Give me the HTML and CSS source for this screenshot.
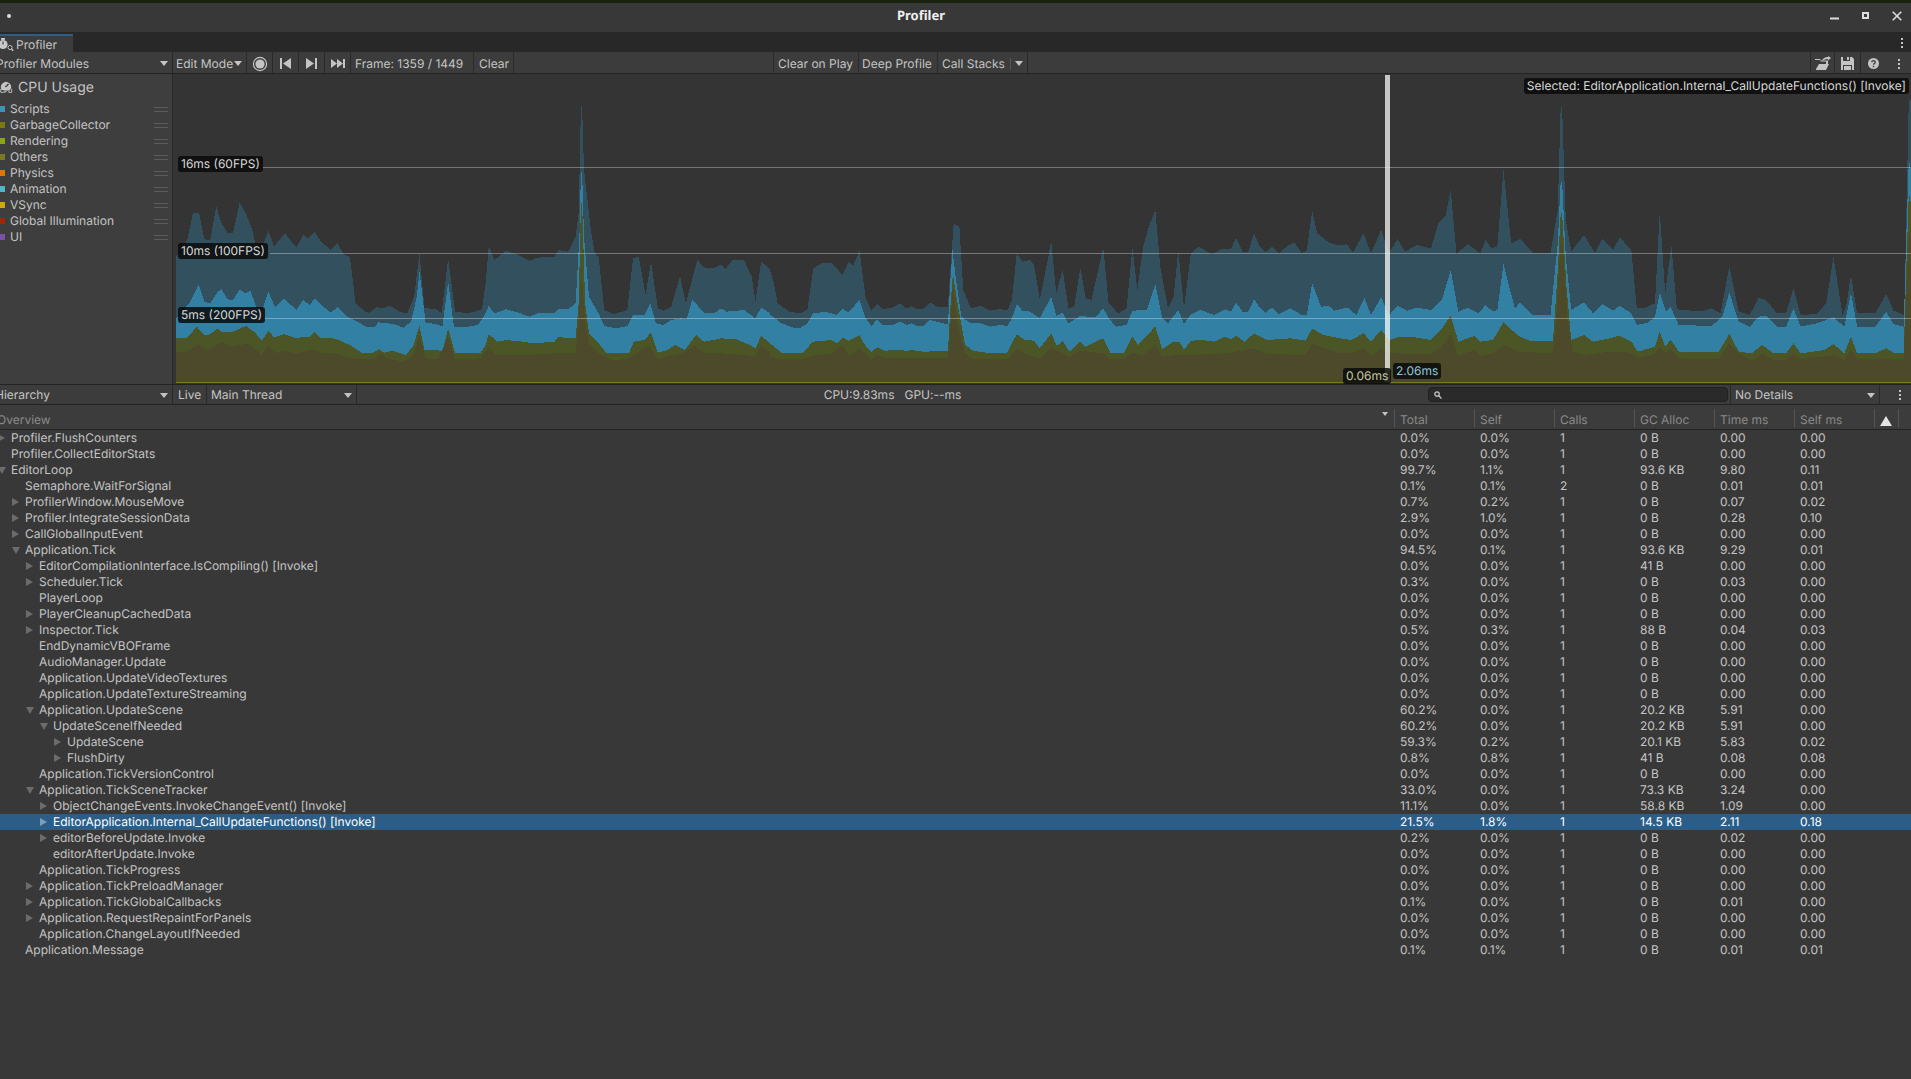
FILE: index.html
```html
<!DOCTYPE html>
<html lang="en">
<head>
    <meta charset="UTF-8">
    <meta name="viewport" content="width=device-width, initial-scale=1.0">
    <title>Profiler</title>
    <link rel="stylesheet" href="styles.css">
</head>
<body>
    <div class="top-line"></div>
    <header class="title-bar">
        <span class="menu-dot"></span>
        <span class="title">Profiler</span>
        <div class="win-btns">
            <svg width="9" height="9" viewBox="0 0 9 9"><path d="M0 7.5h9" stroke="#ddd" stroke-width="2"/></svg>
            <svg width="7" height="7" viewBox="0 0 7 7"><path d="M1 1h5v5H1z" fill="none" stroke="#ddd" stroke-width="2"/></svg>
            <svg width="10" height="10" viewBox="0 0 10 10"><path d="M.7.7l8.6 8.6M9.3.7L.7 9.3" stroke="#ddd" stroke-width="1.6"/></svg>
        </div>
    </header>

    <div class="tab-bar">
        <div class="tab">
            <svg class="tab-icon" width="14" height="14" viewBox="0 0 14 14">
                <circle cx="3" cy="6.5" r="4.6" fill="#c8c8c8"/>
                <path d="M1.5 0h3v1.5h-3zM3 3v3.5" stroke="#c8c8c8" fill="#c8c8c8"/>
                <path d="M3 3.5v3" stroke="#333"/>
                <circle cx="10" cy="9.5" r="2" fill="#282828" stroke="#c8c8c8"/>
                <path d="M11.5 11l1.8 1.8" stroke="#c8c8c8" stroke-width="1.3"/>
            </svg>
            <span>Profiler</span>
        </div>
        <span class="kebab tab-kebab"><i></i><i></i><i></i></span>
    </div>

    <div class="toolbar">
        <div class="tool drop w-modules"><span class="cut">Profiler Modules</span><b class="caret"></b></div>
        <div class="tool drop w-mode"><span>Edit Mode</span><b class="caret"></b></div>
        <div class="tool icon w-btn">
            <svg width="16" height="16" viewBox="0 0 16 16"><circle cx="8" cy="8" r="6.6" fill="none" stroke="#c4c4c4" stroke-width="1.2"/><circle cx="8" cy="8" r="4.6" fill="#c4c4c4"/></svg>
        </div>
        <div class="tool icon w-btn">
            <svg width="11" height="11" viewBox="0 0 11 11"><path d="M0 0h2v11H0zM11 0v11L3 5.5z" fill="#c4c4c4"/></svg>
        </div>
        <div class="tool icon w-btn">
            <svg width="11" height="11" viewBox="0 0 11 11"><path d="M9 0h2v11H9zM0 0v11l8-5.5z" fill="#c4c4c4"/></svg>
        </div>
        <div class="tool icon w-btn">
            <svg width="14" height="9" viewBox="0 0 14 9"><path d="M0 0v9l6-4.5zM6 0v9l6-4.5zM12 0h2v9h-2z" fill="#c4c4c4"/></svg>
        </div>
        <div class="tool w-frame">Frame: 1359 / 1449</div>
        <div class="tool w-clear">Clear</div>
        <div class="tool w-gap"></div>
        <div class="tool w-cop">Clear on Play</div>
        <div class="tool w-deep">Deep Profile</div>
        <div class="tool drop w-stacks"><span>Call Stacks</span><u class="sep"></u><b class="caret"></b></div>
        <div class="grow"></div>
        <div class="tool-end icon w-end">
            <svg width="16" height="15" viewBox="0 0 16 15"><path d="M0 4h5l1 1.5h5V8H4L1 13V14h10l3-6h-1V4.500H6L5 3H0z" fill="#c4c4c4"/><path d="M7 5c1-3 3-4 6-4V0l3 2-3 2.500V3C10 3 8.500 4 7 5z" fill="#c4c4c4"/></svg>
        </div>
        <div class="tool-end icon w-end2">
            <svg width="13" height="13" viewBox="0 0 13 13"><path d="M0 0h2v4h7V0h2l2 2v11h-2V8H2v5H0z" fill="#c4c4c4"/><path d="M6 0h2v3H6zM3 9h7v4H3z" fill="#c4c4c4"/></svg>
        </div>
        <div class="tool-end icon w-end2">
            <svg width="11" height="11" viewBox="0 0 11 11"><circle cx="5.5" cy="5.5" r="5.5" fill="#c4c4c4"/><path d="M3.8 4.200c0-2.200 3.400-2.200 3.400 0 0 1.300-1.700 1.200-1.700 2.500" fill="none" stroke="#3c3c3c" stroke-width="1.3"/><path d="M4.800 7.800h1.400v1.400H4.800z" fill="#3c3c3c"/></svg>
        </div>
        <div class="icon w-end3"><span class="kebab"><i></i><i></i><i></i></span></div>
    </div>

    <div class="chart-row">
        <aside class="modules">
            <div class="module-head">
                <span class="cpu-icon">
                    <svg width="12" height="9" viewBox="0 0 12 9"><path d="M2 9a5 5 0 1 1 8 0z" fill="#c4c4c4"/><path d="M5.5 6l3-3" stroke="#3e3e3e" stroke-width="1.4"/></svg>
                    <em>CPU</em>
                </span>
                <span>CPU Usage</span>
            </div>
            <ul class="legend">
                <li><i class="c-scripts"></i>Scripts<s></s></li>
                <li><i class="c-gc"></i>GarbageCollector<s></s></li>
                <li><i class="c-render"></i>Rendering<s></s></li>
                <li><i class="c-others"></i>Others<s></s></li>
                <li><i class="c-physics"></i>Physics<s></s></li>
                <li><i class="c-anim"></i>Animation<s></s></li>
                <li><i class="c-vsync"></i>VSync<s></s></li>
                <li><i class="c-gi"></i>Global Illumination<s></s></li>
                <li><i class="c-ui"></i>UI<s></s></li>
            </ul>
        </aside>
        <div class="chart">
            <svg class="graph" width="1738" height="310" viewBox="173 74 1738 310">
                <!-- traced in three pieces, left / middle / right -->
                <g transform="translate(170 70) scale(.38265 .33333)">
                    <polygon class="l-a" points="16,937 16,560 30,545 45,510 60,430 76,428 90,508 105,510 121,410 135,460 150,488 165,488 182,398 200,435 215,480 225,530 240,535 257,482 272,530 300,490 330,532 348,495 362,505 378,485 395,515 420,540 438,520 455,555 470,560 485,700 510,725 520,728 540,712 555,715 575,708 600,725 620,730 638,680 652,550 665,715 690,716 710,728 727,565 745,725 780,730 815,718 825,640 833,528 848,570 878,543 910,555 940,572 960,563 1005,560 1015,540 1040,545 1060,500 1068,430 1074,108 1077,108 1082,300 1100,480 1110,550 1120,560 1135,720 1160,733 1195,720 1210,565 1225,560 1243,675 1257,575 1275,715 1290,722 1310,710 1333,618 1348,700 1378,570 1395,592 1420,595 1440,583 1452,597 1470,570 1500,570 1520,620 1530,695 1545,575 1568,597 1568,937"/>
                    <polygon class="l-b" points="16,937 16,745 50,700 75,645 90,695 105,700 125,665 135,658 150,688 165,690 182,658 197,670 210,662 225,710 240,725 257,665 275,713 298,685 330,720 348,690 365,705 378,685 395,705 420,728 438,712 460,738 490,755 515,772 535,770 545,757 585,762 610,773 630,755 645,680 652,605 660,680 668,758 695,762 712,770 727,635 742,770 770,772 805,765 820,740 833,708 848,730 878,718 910,728 940,740 960,730 1005,730 1015,718 1040,718 1060,700 1070,500 1074,305 1077,305 1082,500 1095,680 1120,730 1135,768 1165,775 1195,768 1210,735 1240,735 1255,700 1270,760 1290,765 1310,750 1335,745 1350,748 1365,688 1395,728 1425,728 1440,715 1455,725 1500,720 1530,745 1545,712 1568,730 1568,937"/>
                    <polygon class="l-c" points="16,937 16,805 45,803 70,770 90,795 105,793 125,775 135,785 165,785 198,768 220,785 240,812 257,783 272,802 298,793 330,805 350,800 365,800 378,785 395,805 420,803 440,810 470,825 500,848 530,848 545,838 560,848 580,842 615,855 635,830 652,768 665,840 700,840 712,845 727,775 745,850 810,850 825,825 833,792 855,815 880,810 920,815 950,820 1005,815 1015,800 1040,805 1060,805 1068,700 1074,400 1077,400 1085,700 1095,790 1120,820 1140,848 1200,848 1212,815 1240,810 1257,788 1275,848 1300,840 1320,825 1345,840 1375,795 1395,815 1420,810 1440,805 1480,808 1515,825 1530,835 1545,797 1568,820 1568,937"/>
                    <polygon class="l-d" points="16,937 16,848 45,845 75,822 95,843 135,815 165,830 205,820 225,840 240,855 257,825 275,850 298,842 330,850 350,845 378,838 400,850 430,850 470,865 530,868 552,852 575,868 610,875 635,858 652,795 668,865 700,868 727,800 745,868 810,865 833,830 850,855 930,855 1005,850 1060,850 1068,750 1075,590 1085,760 1095,820 1120,850 1160,872 1200,865 1250,825 1275,868 1320,853 1340,850 1370,825 1395,850 1440,850 1530,858 1545,825 1568,850 1568,937"/>
                </g>
                <g transform="translate(770 70) scale(.38265 .33333)">
                    <polygon class="l-a" points="0,937 0,600 10,640 20,700 50,725 80,730 98,718 113,595 135,580 160,578 190,615 205,577 218,585 234,543 250,685 265,722 280,702 295,718 320,712 340,700 358,716 370,708 385,718 403,715 418,697 440,712 465,712 472,590 480,462 495,470 505,660 525,715 550,708 575,722 600,717 620,722 632,690 645,550 660,575 680,570 690,585 705,690 735,515 748,670 765,600 780,715 795,710 811,593 825,685 840,690 871,533 885,700 910,730 932,715 947,533 960,660 975,530 990,470 1007,420 1020,590 1040,715 1055,680 1067,542 1082,715 1100,550 1120,530 1155,553 1180,538 1205,537 1218,503 1235,545 1250,545 1265,490 1280,530 1295,547 1312,530 1330,550 1355,525 1370,517 1390,550 1403,540 1417,422 1430,490 1460,517 1480,525 1490,525 1490,937"/>
                    <polygon class="l-b" points="0,937 0,733 30,760 60,773 80,773 98,760 113,728 150,727 175,735 190,717 205,727 234,690 250,745 265,768 280,748 295,765 320,765 340,755 358,765 370,760 385,768 403,767 418,750 465,763 472,620 477,540 485,620 500,740 525,760 550,760 575,770 600,765 620,768 632,745 645,703 660,722 680,725 705,745 735,680 748,738 765,728 780,760 810,738 850,742 871,715 885,745 905,770 932,765 947,722 985,720 1007,642 1025,745 1040,760 1067,720 1082,762 1100,733 1125,720 1160,735 1190,718 1205,725 1218,698 1235,725 1250,725 1265,688 1280,712 1295,728 1312,712 1330,732 1360,715 1390,735 1403,735 1417,640 1440,710 1460,708 1475,722 1490,718 1490,937"/>
                    <polygon class="l-c" points="0,937 0,820 30,848 85,848 113,815 160,810 175,820 190,802 205,812 234,795 250,830 265,845 280,832 300,842 340,840 358,843 370,840 400,845 465,843 472,700 478,610 490,700 510,825 530,842 575,850 620,848 645,792 665,810 690,812 705,835 735,790 750,828 765,812 782,845 811,815 825,830 870,805 890,848 925,848 947,800 962,825 1000,778 1007,770 1025,838 1055,815 1070,815 1082,840 1100,812 1130,810 1160,815 1190,800 1205,808 1218,797 1240,815 1265,790 1300,810 1360,805 1400,812 1417,775 1445,795 1490,805 1490,937"/>
                    <polygon class="l-d" points="0,937 0,860 30,868 85,868 113,855 160,852 190,825 205,858 234,835 265,868 280,855 300,865 465,865 472,760 478,640 490,760 510,850 530,868 620,868 645,835 665,852 705,865 735,832 765,850 782,860 811,842 870,850 890,868 925,868 947,848 975,855 1007,825 1025,860 1060,855 1100,855 1190,850 1265,835 1300,852 1400,855 1417,822 1490,850 1490,937"/>
                </g>
                <g transform="translate(1340 70) scale(.36416 .33333)">
                    <polygon class="l-a" points="0,937 0,525 20,523 35,548 65,490 85,550 113,480 135,548 158,507 178,545 210,525 250,535 270,460 290,437 304,360 320,552 350,522 385,550 400,510 415,535 432,530 449,300 470,520 495,507 530,548 578,548 598,420 606,110 610,110 620,450 635,545 670,495 700,548 720,507 750,540 768,502 800,540 815,715 835,715 865,700 878,425 893,670 910,525 925,718 965,722 1000,722 1020,715 1045,730 1069,590 1095,725 1125,735 1150,683 1170,690 1200,730 1225,730 1245,655 1265,735 1310,732 1335,700 1355,560 1380,735 1390,710 1403,615 1420,730 1470,730 1500,672 1520,722 1550,735 1555,450 1562,85 1568,90 1568,937"/>
                    <polygon class="l-b" points="0,937 0,718 20,712 45,735 67,683 85,735 113,682 135,735 158,708 185,722 210,713 250,720 280,690 304,600 325,725 350,713 380,730 400,705 420,725 432,720 449,582 480,715 495,698 530,735 578,735 598,520 606,335 610,335 620,560 635,720 670,697 695,730 720,702 750,722 768,707 800,730 815,765 845,758 865,740 878,668 895,725 908,712 930,765 1020,768 1050,740 1069,668 1095,755 1125,770 1150,740 1170,738 1200,770 1225,770 1245,715 1265,770 1310,760 1355,742 1385,770 1403,668 1420,770 1470,770 1500,725 1520,762 1548,770 1555,500 1562,270 1568,300 1568,937"/>
                    <polygon class="l-c" points="0,937 0,805 30,810 65,790 85,815 113,780 135,810 165,800 205,802 250,810 280,775 304,737 325,815 368,798 385,815 420,810 449,757 490,798 520,812 585,812 598,600 606,430 610,430 622,650 635,810 670,795 695,815 740,805 768,797 800,815 818,845 865,830 878,785 893,830 908,808 930,845 1040,845 1069,792 1095,845 1130,850 1160,825 1190,850 1225,850 1245,820 1265,850 1330,840 1355,822 1385,850 1403,800 1420,850 1470,850 1500,835 1520,848 1548,850 1555,600 1562,370 1568,400 1568,937"/>
                    <polygon class="l-d" points="0,937 0,850 30,850 65,835 85,858 113,835 135,850 250,852 280,830 304,790 325,858 368,840 385,858 420,850 449,825 490,845 585,850 595,720 608,470 625,750 640,845 670,855 740,845 800,848 818,865 865,850 878,830 893,850 908,835 930,865 1040,868 1069,820 1095,850 1130,872 1160,850 1190,870 1225,870 1245,850 1265,868 1355,855 1385,870 1403,840 1420,868 1548,868 1555,650 1562,500 1568,500 1568,937"/>
                </g>
                <path class="base" d="M176 382.5H1911"/>
                <path class="grid" d="M262 167.5H1911M270 253.5H1911M264 318.5H1911"/>
                <path class="sel-bar" d="M1387.5 75V382"/>
            </svg>
            <span class="pill p16">16ms (60FPS)</span>
            <span class="pill p10">10ms (100FPS)</span>
            <span class="pill p5">5ms (200FPS)</span>
            <span class="pill p-self">0.06ms</span>
            <span class="pill p-total">2.06ms</span>
            <span class="pill p-name">Selected: EditorApplication.Internal_CallUpdateFunctions() [Invoke]</span>
        </div>
    </div>

    <div class="toolbar toolbar-2">
        <div class="tool drop w-hier"><span class="cut-h">Hierarchy</span><b class="caret"></b></div>
        <div class="tool w-live">Live</div>
        <div class="tool drop w-thread"><span>Main Thread</span><b class="caret"></b></div>
        <div class="stats"><span>CPU:9.83ms</span><span>GPU:--ms</span></div>
        <div class="search">
            <svg width="8" height="8" viewBox="0 0 8 8"><circle cx="3" cy="3" r="2.2" fill="none" stroke="#c4c4c4" stroke-width="1.3"/><path d="M4.7 4.7L7.5 7.5" stroke="#c4c4c4" stroke-width="1.3"/></svg>
        </div>
        <div class="tool drop w-details"><span>No Details</span><b class="caret"></b></div>
        <div class="icon w-end4"><span class="kebab"><i></i><i></i><i></i></span></div>
    </div>

    <div class="thead">
        <div class="th-name"><span class="cut-o">Overview</span><b class="sort-mini"></b></div>
        <div class="th">Total</div>
        <div class="th">Self</div>
        <div class="th">Calls</div>
        <div class="th">GC Alloc</div>
        <div class="th">Time ms</div>
        <div class="th">Self ms</div>
        <div class="th th-warn"><b class="warn"></b></div>
    </div>

    <main class="tbody">
        <div class="row"><div class="name d0 closed">Profiler.FlushCounters</div><div>0.0%</div><div>0.0%</div><div>1</div><div>0 B</div><div>0.00</div><div>0.00</div></div>
        <div class="row"><div class="name d0">Profiler.CollectEditorStats</div><div>0.0%</div><div>0.0%</div><div>1</div><div>0 B</div><div>0.00</div><div>0.00</div></div>
        <div class="row"><div class="name d0 open">EditorLoop</div><div>99.7%</div><div>1.1%</div><div>1</div><div>93.6 KB</div><div>9.80</div><div>0.11</div></div>
        <div class="row"><div class="name d1">Semaphore.WaitForSignal</div><div>0.1%</div><div>0.1%</div><div>2</div><div>0 B</div><div>0.01</div><div>0.01</div></div>
        <div class="row"><div class="name d1 closed">ProfilerWindow.MouseMove</div><div>0.7%</div><div>0.2%</div><div>1</div><div>0 B</div><div>0.07</div><div>0.02</div></div>
        <div class="row"><div class="name d1 closed">Profiler.IntegrateSessionData</div><div>2.9%</div><div>1.0%</div><div>1</div><div>0 B</div><div>0.28</div><div>0.10</div></div>
        <div class="row"><div class="name d1 closed">CallGlobalInputEvent</div><div>0.0%</div><div>0.0%</div><div>1</div><div>0 B</div><div>0.00</div><div>0.00</div></div>
        <div class="row"><div class="name d1 open">Application.Tick</div><div>94.5%</div><div>0.1%</div><div>1</div><div>93.6 KB</div><div>9.29</div><div>0.01</div></div>
        <div class="row"><div class="name d2 closed">EditorCompilationInterface.IsCompiling() [Invoke]</div><div>0.0%</div><div>0.0%</div><div>1</div><div>41 B</div><div>0.00</div><div>0.00</div></div>
        <div class="row"><div class="name d2 closed">Scheduler.Tick</div><div>0.3%</div><div>0.0%</div><div>1</div><div>0 B</div><div>0.03</div><div>0.00</div></div>
        <div class="row"><div class="name d2">PlayerLoop</div><div>0.0%</div><div>0.0%</div><div>1</div><div>0 B</div><div>0.00</div><div>0.00</div></div>
        <div class="row"><div class="name d2 closed">PlayerCleanupCachedData</div><div>0.0%</div><div>0.0%</div><div>1</div><div>0 B</div><div>0.00</div><div>0.00</div></div>
        <div class="row"><div class="name d2 closed">Inspector.Tick</div><div>0.5%</div><div>0.3%</div><div>1</div><div>88 B</div><div>0.04</div><div>0.03</div></div>
        <div class="row"><div class="name d2">EndDynamicVBOFrame</div><div>0.0%</div><div>0.0%</div><div>1</div><div>0 B</div><div>0.00</div><div>0.00</div></div>
        <div class="row"><div class="name d2">AudioManager.Update</div><div>0.0%</div><div>0.0%</div><div>1</div><div>0 B</div><div>0.00</div><div>0.00</div></div>
        <div class="row"><div class="name d2">Application.UpdateVideoTextures</div><div>0.0%</div><div>0.0%</div><div>1</div><div>0 B</div><div>0.00</div><div>0.00</div></div>
        <div class="row"><div class="name d2">Application.UpdateTextureStreaming</div><div>0.0%</div><div>0.0%</div><div>1</div><div>0 B</div><div>0.00</div><div>0.00</div></div>
        <div class="row"><div class="name d2 open">Application.UpdateScene</div><div>60.2%</div><div>0.0%</div><div>1</div><div>20.2 KB</div><div>5.91</div><div>0.00</div></div>
        <div class="row"><div class="name d3 open">UpdateSceneIfNeeded</div><div>60.2%</div><div>0.0%</div><div>1</div><div>20.2 KB</div><div>5.91</div><div>0.00</div></div>
        <div class="row"><div class="name d4 closed">UpdateScene</div><div>59.3%</div><div>0.2%</div><div>1</div><div>20.1 KB</div><div>5.83</div><div>0.02</div></div>
        <div class="row"><div class="name d4 closed">FlushDirty</div><div>0.8%</div><div>0.8%</div><div>1</div><div>41 B</div><div>0.08</div><div>0.08</div></div>
        <div class="row"><div class="name d2">Application.TickVersionControl</div><div>0.0%</div><div>0.0%</div><div>1</div><div>0 B</div><div>0.00</div><div>0.00</div></div>
        <div class="row"><div class="name d2 open">Application.TickSceneTracker</div><div>33.0%</div><div>0.0%</div><div>1</div><div>73.3 KB</div><div>3.24</div><div>0.00</div></div>
        <div class="row"><div class="name d3 closed">ObjectChangeEvents.InvokeChangeEvent() [Invoke]</div><div>11.1%</div><div>0.0%</div><div>1</div><div>58.8 KB</div><div>1.09</div><div>0.00</div></div>
        <div class="row selected"><div class="name d3 closed">EditorApplication.Internal_CallUpdateFunctions() [Invoke]</div><div>21.5%</div><div>1.8%</div><div>1</div><div>14.5 KB</div><div>2.11</div><div>0.18</div></div>
        <div class="row"><div class="name d3 closed">editorBeforeUpdate.Invoke</div><div>0.2%</div><div>0.0%</div><div>1</div><div>0 B</div><div>0.02</div><div>0.00</div></div>
        <div class="row"><div class="name d3">editorAfterUpdate.Invoke</div><div>0.0%</div><div>0.0%</div><div>1</div><div>0 B</div><div>0.00</div><div>0.00</div></div>
        <div class="row"><div class="name d2">Application.TickProgress</div><div>0.0%</div><div>0.0%</div><div>1</div><div>0 B</div><div>0.00</div><div>0.00</div></div>
        <div class="row"><div class="name d2 closed">Application.TickPreloadManager</div><div>0.0%</div><div>0.0%</div><div>1</div><div>0 B</div><div>0.00</div><div>0.00</div></div>
        <div class="row"><div class="name d2 closed">Application.TickGlobalCallbacks</div><div>0.1%</div><div>0.0%</div><div>1</div><div>0 B</div><div>0.01</div><div>0.00</div></div>
        <div class="row"><div class="name d2 closed">Application.RequestRepaintForPanels</div><div>0.0%</div><div>0.0%</div><div>1</div><div>0 B</div><div>0.00</div><div>0.00</div></div>
        <div class="row"><div class="name d2">Application.ChangeLayoutIfNeeded</div><div>0.0%</div><div>0.0%</div><div>1</div><div>0 B</div><div>0.00</div><div>0.00</div></div>
        <div class="row"><div class="name d1">Application.Message</div><div>0.1%</div><div>0.1%</div><div>1</div><div>0 B</div><div>0.01</div><div>0.01</div></div>
    </main>
</body>
</html>
```

FILE: styles.css
```css
*{
    box-sizing: border-box;
}
html,body{
    height: 100%;
}
body{
    margin: 0;
    display: flex;
    flex-direction: column;
    overflow: hidden;
    background: #383838;
    color: #c4c4c4;
    font: 12px/16px Inter, "Noto Sans", sans-serif;
    text-rendering: geometricPrecision;
}

/* window frame */
.top-line{
    height: 3px;
    background: #1c2212;
}
.title-bar{
    height: 29px;
    display: flex;
    align-items: center;
    justify-content: center;
    position: relative;
    padding: 0 69px 5px 0;
    background: #383838;
}
.title{
    font: bold 13px "Noto Sans", sans-serif;
    color: #f0f0f0;
}
.menu-dot{
    position: absolute;
    left: 7px;
    top: 11px;
    width: 4px;
    height: 4px;
    border-radius: 50%;
    background: #ddd;
}
.win-btns{
    position: absolute;
    right: 9px;
    top: 0;
    height: 100%;
    display: flex;
    align-items: center;
    gap: 23px;
    padding-bottom: 4px;
}
.tab-bar{
    height: 20px;
    display: flex;
    align-items: flex-end;
    justify-content: space-between;
    background: #282828;
}
.tab{
    width: 73px;
    height: 18px;
    display: flex;
    align-items: center;
    gap: 2px;
    padding-top: 1px;
    border-top: 2px solid #2c5d87;
    background: #3c3c3c;
}
.tab-icon{
    flex: none;
}
.kebab{
    display: flex;
    flex-direction: column;
    gap: 2px;
}
.kebab i{
    width: 2px;
    height: 2px;
    background: #c4c4c4;
}
.tab-kebab{
    margin: 0 8px 4px 0;
}

/* toolbars */
.toolbar{
    height: 22px;
    flex: none;
    display: flex;
    background: #3c3c3c;
    border-bottom: 1px solid #232323;
}
.toolbar-2{
    height: 21px;
    border-top: 1px solid #232323;
}
.tool{
    display: flex;
    align-items: center;
    padding: 2px 3px 0 4px;
    border-right: 1px solid #2a2a2a;
    white-space: nowrap;
}
.tool-end{
    border-left: 1px solid #2a2a2a;
}
.drop{
    justify-content: space-between;
}
.icon{
    display: flex;
    align-items: center;
    justify-content: center;
    padding: 2px 0 0;
}
.toolbar-2 .tool,.toolbar-2 .icon{
    padding-top: 1px;
}
.grow{
    flex: 1;
}
.caret{
    width: 0;
    height: 0;
    margin-right: 1px;
    border-left: 4px solid transparent;
    border-right: 4px solid transparent;
    border-top: 5px solid #c4c4c4;
}
.sep{
    width: 1px;
    height: 12px;
    margin-left: auto;
    margin-right: 4px;
    background: #555;
}
.cut{
    margin-left: -8px;
}
.cut-h{
    margin-left: -9px;
}
.w-modules{ width: 173px; }
.w-mode{ width: 74px; padding-left: 3px; }
.w-btn{ width: 26px; }
.w-frame{ width: 123px; }
.w-clear{ width: 40px; padding-left: 5px; }
.w-gap{ width: 260px; }
.w-cop{ width: 85px; }
.w-deep{ width: 79px; padding-left: 3px; }
.w-stacks{ width: 90px; }
.w-end{ width: 24px; }
.w-end2{ width: 26px; }
.w-end3{ width: 25px; }
.w-hier{ width: 173px; }
.w-live{ width: 34px; padding-left: 5px; }
.w-thread{ width: 150px; }
.w-details{ width: 150px; border-left: 1px solid #2a2a2a; border-right: 1px solid #2a2a2a; margin-left: 2px; }
.w-end4{ flex: 1; padding-left: 17px; }
.w-end4 .kebab{
    margin-right: 8px;
}
.stats{
    width: 1071px;
    display: flex;
    justify-content: center;
    gap: 10px;
    align-items: center;
    padding-top: 1px;
}
.search{
    width: 300px;
    height: 15px;
    margin-top: 2px;
    display: flex;
    align-items: center;
    padding-left: 5px;
    border-radius: 4px;
    background: #2a2a2a;
    border: 1px solid #212121;
}

/* chart area */
.chart-row{
    height: 310px;
    flex: none;
    display: flex;
}
.modules{
    width: 173px;
    flex: none;
    background: #3e3e3e;
    border-right: 1px solid #2a2a2a;
}
.module-head{
    height: 27px;
    display: flex;
    align-items: center;
    gap: 6px;
    font-size: 14px;
}
.cpu-icon{
    width: 12px;
    display: flex;
    flex-direction: column;
    align-items: center;
}
.cpu-icon em{
    font: bold 6px/6px Inter, sans-serif;
    margin-top: -1px;
}
.legend{
    list-style: none;
    margin: 0;
    padding: 0;
}
.legend li{
    height: 16px;
    display: flex;
    align-items: center;
}
.legend i{
    width: 5px;
    height: 6px;
    margin-right: 5px;
    background: #888;
}
.legend s{
    width: 14px;
    height: 5px;
    margin-left: auto;
    margin-right: 4px;
    border-top: 1px solid #5c5c5c;
    border-bottom: 1px solid #5c5c5c;
}
.legend .c-scripts{ background: #3a96b8; }
.legend .c-gc{ background: #7a7a10; }
.legend .c-render{ background: #8aa510; }
.legend .c-others{ background: #7a7a20; }
.legend .c-physics{ background: #e07800; }
.legend .c-anim{ background: #4fb8c8; }
.legend .c-vsync{ background: #d0a800; }
.legend .c-gi{ background: #a02800; }
.legend .c-ui{ background: #7a50a8; }

.chart{
    flex: 1;
    position: relative;
    overflow: hidden;
    background: #343434;
}
.graph{
    display: block;
    shape-rendering: crispEdges;
}
.l-a{ fill: #33505e; }
.l-b{ fill: #3280a3; }
.l-c{ fill: #4c5525; }
.l-d{ fill: #4c4a2a; }
.grid{
    stroke: rgba(255, 255, 255, .33);
    stroke-width: 1;
    fill: none;
}
.base{
    stroke: #7a7a20;
    stroke-width: 1;
}
.sel-bar{
    stroke: rgba(255, 255, 255, .72);
    stroke-width: 5;
}
.pill{
    position: absolute;
    height: 16px;
    padding: 0 3px;
    border-radius: 3px;
    background: rgba(10, 10, 10, .85);
    color: #d8d8d8;
    white-space: nowrap;
}
.p16{ left: 5px; top: 82px; }
.p10{ left: 5px; top: 169px; }
.p5{ left: 5px; top: 233px; }
.p-self{ left: 1170px; top: 294px; color: #c8c8a0; }
.p-total{ left: 1220px; top: 289px; color: #8fc4dc; }
.p-name{ right: 2px; top: 4px; }

/* table */
.thead,.row{
    display: grid;
    grid-template-columns: 1394px repeat(6, 80px) 37px;
}
.thead{
    height: 25px;
    flex: none;
    align-items: end;
    padding-bottom: 2px;
    background: #3c3c3c;
    border-bottom: 1px solid #232323;
    color: #8a8a8a;
}
.th-name{
    position: relative;
    height: 18px;
    line-height: 21px;
}
.cut-o{
    margin-left: -3px;
}
.sort-mini{
    position: absolute;
    right: 6px;
    top: 3px;
    width: 0;
    height: 0;
    border-left: 3px solid transparent;
    border-right: 3px solid transparent;
    border-top: 4px solid #c4c4c4;
}
.th{
    height: 18px;
    line-height: 21px;
    padding-left: 5px;
    border-left: 1px solid #555;
}
.th-warn{
    display: flex;
    align-items: flex-end;
    padding: 0 0 1px 5px;
    width: 25px;
    border-right: 1px solid #555;
}
.warn{
    width: 0;
    height: 0;
    border-left: 6px solid transparent;
    border-right: 6px solid transparent;
    border-bottom: 10px solid #e4e4e4;
}
.tbody{
    flex: 1;
    background: #383838;
}
.row{
    height: 16px;
}
.row > div:not(.name){
    padding-left: 6px;
}
.row.selected{
    background: #2c5d87;
    color: #fff;
}
.name{
    position: relative;
    white-space: nowrap;
}
.closed::before,.open::before{
    content: '';
    position: absolute;
    width: 0;
    height: 0;
}
.closed::before{
    top: 4px;
    margin-left: -13px;
    border-top: 4px solid transparent;
    border-bottom: 4px solid transparent;
    border-left: 7px solid #6c6c6c;
}
.open::before{
    top: 5px;
    margin-left: -13px;
    border-left: 4px solid transparent;
    border-right: 4px solid transparent;
    border-top: 7px solid #6c6c6c;
}
.selected .closed::before{
    border-left-color: #7e9cb6;
}
.d0{ padding-left: 11px; }
.d1{ padding-left: 25px; }
.d2{ padding-left: 39px; }
.d3{ padding-left: 53px; }
.d4{ padding-left: 67px; }
```
